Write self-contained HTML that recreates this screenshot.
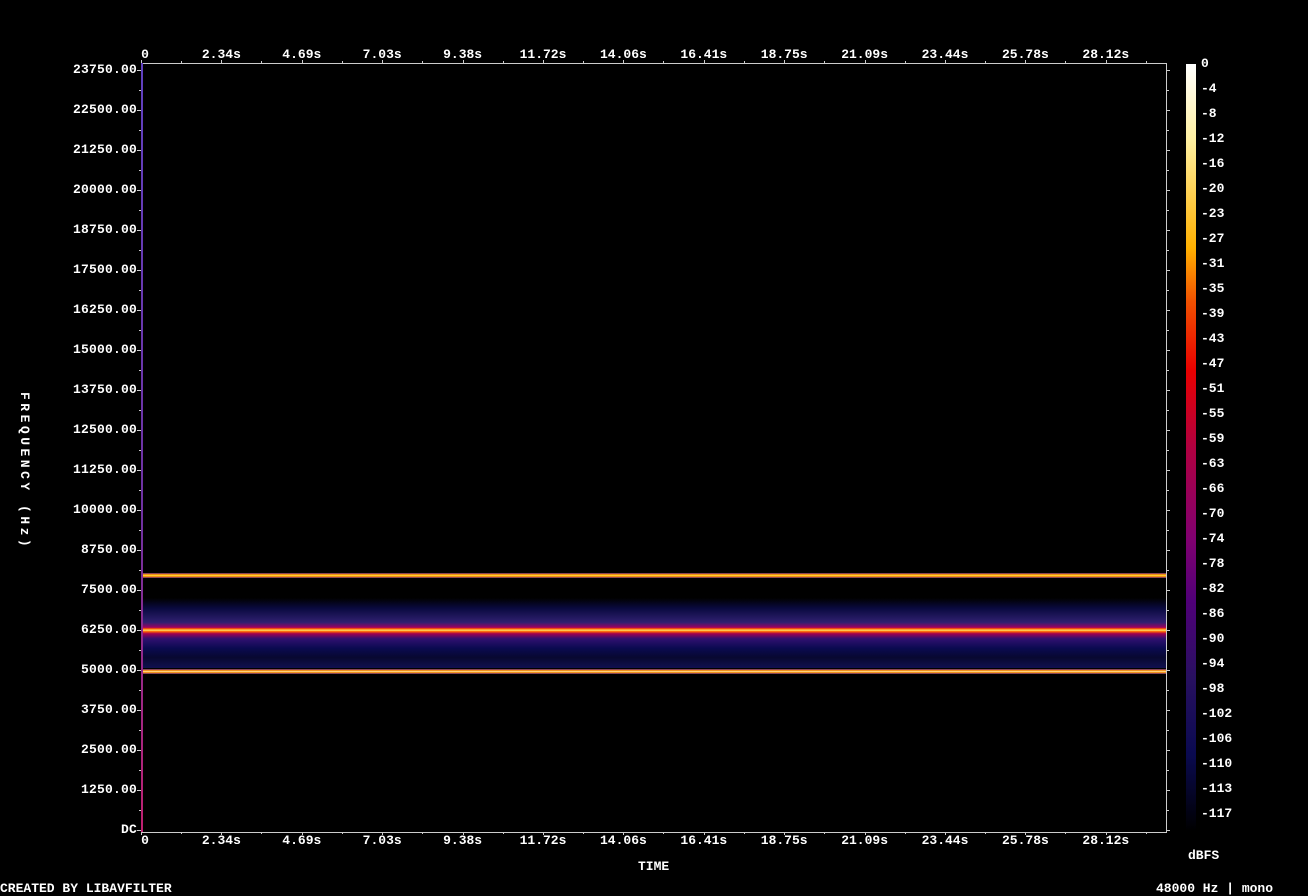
<!DOCTYPE html>
<html><head><style>
body{margin:0;width:1308px;height:896px;background:#000;position:relative;overflow:hidden;font-family:"Liberation Mono",monospace;font-weight:bold;font-size:13px;color:#fff}
.t{position:absolute;line-height:10px;white-space:pre}
.fl{position:absolute;right:1171px;line-height:10px;letter-spacing:0.2px}
.tk{position:absolute;background:#ccc}
.tl{position:absolute;line-height:10px;transform:translateX(-50%)}
.cl{position:absolute;left:1201px;line-height:10px}
</style></head><body>
<div style="position:absolute;left:141px;top:63px;width:1025px;height:768px;border:1px solid #ccc;border-left:none"></div>
<div style="position:absolute;left:141px;top:63px;width:2px;height:769px;background:linear-gradient(#6040c0,#7030a0 60%,#c02070)"></div>
<div style="position:absolute;left:143px;top:573px;width:1023px;height:5px;background:linear-gradient(#502080,#ff9000 30%,#ffe040 50%,#ff9000 70%,#502080)"></div>
<div style="position:absolute;left:143px;top:598px;width:1023px;height:70px;background:linear-gradient(#000,#0a0a40 15%,#302070 35%,#a00060 42%,#ff6000 44%,#ffe060 46%,#ff6000 48%,#a00050 51%,#301070 58%,#0a0a50 72%,#080830 85%,#101050)"></div>
<div style="position:absolute;left:143px;top:669px;width:1023px;height:5px;background:linear-gradient(#502080,#ff9000 30%,#ffe8a0 50%,#ff9000 70%,#502080)"></div>
<div style="position:absolute;left:1186px;top:64px;width:10px;height:767px;background:linear-gradient(#fff,#fff0a0 10%,#ffb000 24%,#f05000 31%,#e80000 40%,#b00040 50%,#800070 62%,#500078 70%,#281060 80%,#0a0a50 90%,#000)"></div>
<div id="f"></div>
<div class="t" style="left:18px;top:392px;writing-mode:vertical-rl;letter-spacing:3.5px;line-height:12px">FREQUENCY (Hz)</div>
<div class="t" style="left:638px;top:862px">TIME</div>
<div class="t" style="left:1188px;top:851px">dBFS</div>
<div class="t" style="left:0px;top:884px">CREATED BY LIBAVFILTER</div>
<div class="t" style="left:1156px;top:884px">48000 Hz | mono</div>
<script>
var h='';var fr=['23750.00','22500.00','21250.00','20000.00','18750.00','17500.00','16250.00','15000.00','13750.00','12500.00','11250.00','10000.00','8750.00','7500.00','6250.00','5000.00','3750.00','2500.00','1250.00','DC'];
for(var i=0;i<20;i++){var y=70+i*40;h+='<div class="fl" style="top:'+(y-5)+'px">'+fr[i]+'</div><div class="tk" style="left:137px;top:'+y+'px;width:4px;height:1px"></div><div class="tk" style="left:1167px;top:'+y+'px;width:3px;height:1px"></div>';
if(i<19)h+='<div class="tk" style="left:139px;top:'+(y+20)+'px;width:2px;height:1px"></div><div class="tk" style="left:1167px;top:'+(y+20)+'px;width:2px;height:1px"></div>';}
var tl=['0','2.34s','4.69s','7.03s','9.38s','11.72s','14.06s','16.41s','18.75s','21.09s','23.44s','25.78s','28.12s'];
for(var k=0;k<13;k++){var x=141+k*80.4;h+='<div class="tl" style="left:'+(k?x:145)+'px;top:50px">'+tl[k]+'</div><div class="tl" style="left:'+(k?x:145)+'px;top:836px">'+tl[k]+'</div>';
h+='<div class="tk" style="left:'+Math.round(x)+'px;top:60px;width:1px;height:3px"></div><div class="tk" style="left:'+Math.round(x)+'px;top:832px;width:1px;height:3px"></div>';
h+='<div class="tk" style="left:'+Math.round(x+40)+'px;top:61px;width:1px;height:2px"></div><div class="tk" style="left:'+Math.round(x+40)+'px;top:832px;width:1px;height:2px"></div>';}
var cl=['0','-4','-8','-12','-16','-20','-23','-27','-31','-35','-39','-43','-47','-51','-55','-59','-63','-66','-70','-74','-78','-82','-86','-90','-94','-98','-102','-106','-110','-113','-117'];
for(var j=0;j<31;j++){h+='<div class="cl" style="top:'+(59+j*25)+'px">'+cl[j]+'</div>';}
document.getElementById('f').innerHTML=h;
</script>
</body></html>
